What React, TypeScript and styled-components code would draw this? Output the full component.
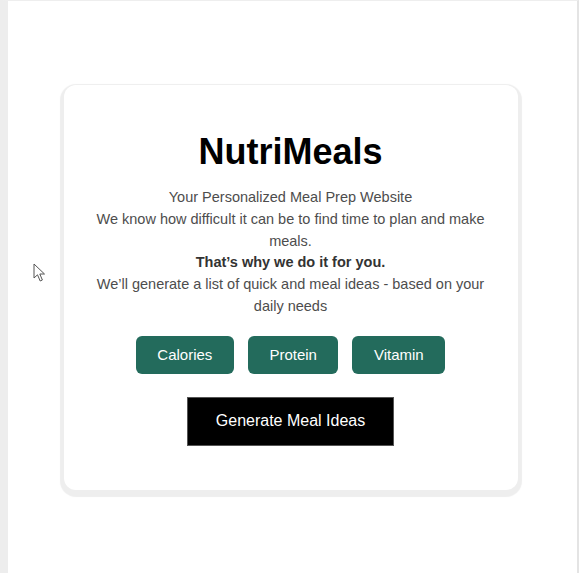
import React, { FC } from "react";
import styled, { createGlobalStyle } from "styled-components";

const GlobalStyle = createGlobalStyle`
  html, body {
    margin: 0;
    padding: 0;
    background: #ffffff;
  }
  body {
    font-family: "Liberation Sans", Arial, sans-serif;
  }
`;

const nutrients = ["Calories", "Protein", "Vitamin"];

const App: FC = (): JSX.Element => {
  return (
    <>
      <GlobalStyle />
      <Page>
        <Pointer width="14" height="20" viewBox="0 0 14 20">
          <path
            d="M1 1 L1 15 L4.5 11.8 L7.2 18 L9.4 17 L6.8 11 L11.5 11 Z"
            fill="#fff"
            stroke="#555"
            strokeWidth="1"
            strokeLinejoin="round"
          />
        </Pointer>
        <Card>
          <Title>NutriMeals</Title>
          <Intro>
            Your Personalized Meal Prep Website
            <br />
            We know how difficult it can be to find time to plan and make meals.
            <br />
            <Strong>That’s why we do it for you.</Strong>
            <br />
            We’ll generate a list of quick and meal ideas - based on your daily
            needs
          </Intro>
          <ChoiceRow>
            {nutrients.map((n) => (
              <Choice key={n} type="button">
                {n}
              </Choice>
            ))}
          </ChoiceRow>
          <Generate type="button">Generate Meal Ideas</Generate>
        </Card>
      </Page>
    </>
  );
};

export default App;

const Page = styled.div`
  position: relative;
  box-sizing: border-box;
  height: 573px;
  border-top: 1px solid #eeeeee;
  border-left: 8px solid #ededed;
  border-right: 2px solid #e4e4e4;
  margin-right: 1px;
  padding-top: 84px;
  display: flex;
  flex-direction: column;
  align-items: center;
`;

const Pointer = styled.svg`
  position: absolute;
  left: 25px;
  top: 262px;
`;

const Card = styled.div`
  box-sizing: border-box;
  width: 454px;
  margin-right: 4px;
  padding: 46px 30px 44px;
  background: #ffffff;
  border-radius: 12px;
  box-shadow: 0 3px 1px 4px #eeeeee;
  display: flex;
  flex-direction: column;
  align-items: center;
  text-align: center;
`;

const Title = styled.h1`
  margin: 0;
  font-size: 36px;
  font-weight: 700;
  line-height: 42px;
  color: #000;
`;

const Intro = styled.p`
  margin: 14px 0 0;
  font-size: 14.5px;
  line-height: 21.8px;
  color: #4d4d4d;
`;

const Strong = styled.b`
  color: #333333;
`;

const ChoiceRow = styled.div`
  display: flex;
  gap: 14px;
  margin-top: 18px;
`;

const Choice = styled.button`
  height: 38px;
  padding: 0 21.5px;
  border: none;
  border-radius: 6px;
  background: #236b5c;
  color: #ffffff;
  font-family: "Liberation Sans", Arial, sans-serif;
  font-size: 15px;
`;

const Generate = styled.button`
  margin-top: 23px;
  width: 207px;
  height: 49px;
  border: 1px solid #555555;
  background: #000000;
  color: #ffffff;
  font-family: "Liberation Sans", Arial, sans-serif;
  font-size: 16px;
`;
